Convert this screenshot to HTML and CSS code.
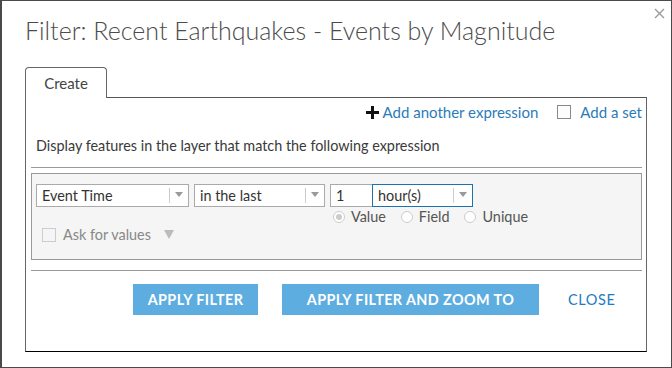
FILE: index.html
```html
<!DOCTYPE html>
<html lang="en">
<head>
  <meta charset="UTF-8" />
  <title>Filter</title>
  <link rel="stylesheet" href="styles.css">
</head>
<body>

  <div class="dialog">
    <svg class="close-x" width="11" height="11" viewBox="0 0 11 11">
      <path d="M1 1L10 10M10 1L1 10" stroke="#9a9a9a" stroke-width="1.4" fill="none"/>
    </svg>
    <h1 class="title">Filter: Recent Earthquakes - Events by Magnitude</h1>

    <div class="tabs">
      <div class="tab">Create</div>
      <div class="tab-rest"></div>
    </div>

    <div class="panel">
      <div class="toolbar">
        <a class="add-link">
          <svg class="plus" width="13" height="13" viewBox="0 0 13 13">
            <rect x="5" y="0" width="3" height="13" fill="#111"/>
            <rect x="0" y="5" width="13" height="3" fill="#111"/>
          </svg>Add another expression</a>
        <label class="set"><span class="box"></span>Add a set</label>
      </div>

      <p class="desc">Display features in the layer that match the following expression</p>

      <div class="expr">
        <div class="expr-row">
          <div class="select field"><span>Event Time</span><i class="arrow"></i></div>
          <div class="select op"><span>in the last</span><i class="arrow"></i></div>
          <div class="num">1</div>
          <div class="select unit"><span>hour(s)</span><i class="arrow"></i></div>
        </div>
        <div class="radios">
          <label><span class="radio on"></span>Value</label>
          <label><span class="radio"></span>Field</label>
          <label><span class="radio"></span>Unique</label>
        </div>
        <div class="ask">
          <span class="box"></span>Ask for values <span class="tri"></span>
        </div>
      </div>

      <div class="actions">
        <button class="btn btn-apply">APPLY FILTER</button>
        <button class="btn btn-zoom">APPLY FILTER AND ZOOM TO</button>
        <a class="close-link">CLOSE</a>
      </div>
    </div>
  </div>

</body>
</html>
```

FILE: styles.css
```css
body {
  margin: 0;
  font-family: Lato, 'Open Sans', sans-serif;
  color: #4c4c4c;
}

.dialog {
  position: relative;
  width: 672px;
  height: 368px;
  box-sizing: border-box;
  border: 1px solid #4a4a4a;
  border-left-width: 2px;
  background: #fff;
  padding: 0 24px 0 23px;
}

.close-x {
  position: absolute;
  top: 7px;
  right: 6px;
}

.title {
  margin: 0;
  padding-top: 14px;
  height: 66px;
  box-sizing: border-box;
  font-size: 25px;
  line-height: 30px;
  font-weight: 300;
  color: #4c4c4c;
  white-space: nowrap;
}

.tabs {
  display: flex;
  align-items: flex-end;
  height: 31px;
}

.tab {
  width: 82px;
  height: 31px;
  box-sizing: border-box;
  border: 1px solid #666;
  border-bottom: none;
  border-radius: 4px 4px 0 0;
  font-size: 15px;
  color: #444;
  text-align: center;
  line-height: 30px;
}

.tab-rest {
  flex: 1;
  border-bottom: 1px solid #555;
}

.panel {
  height: 254px;
  box-sizing: border-box;
  border: 1px solid #666;
  border-top: none;
  border-bottom-color: #000;
  padding: 0 4px 0 5px;
}

.toolbar {
  display: flex;
  justify-content: flex-end;
  align-items: center;
  gap: 19px;
  padding-top: 5px;
  height: 18px;
  font-size: 15px;
  line-height: 18px;
  color: #2b7bb9;
}

.add-link {
  display: flex;
  align-items: center;
}

.plus {
  margin-right: 4px;
}

.set {
  display: flex;
  align-items: center;
  gap: 9px;
}

.box {
  display: inline-block;
  width: 12px;
  height: 12px;
  border: 1px solid #888;
  background: #fbfcfc;
}

.desc {
  margin: 0;
  padding: 16px 0 0 5px;
  height: 30px;
  font-size: 14.4px;
  line-height: 18px;
  color: #3a3a3a;
}

.expr {
  border-top: 1px solid #999;
  padding-top: 5px;
  font-size: 14.4px;
}

.expr > * {
  background: #f4f5f4;
}

.expr-row {
  display: flex;
  gap: 5px;
  padding: 10px 0 0 4px;
  border: 1px solid #999;
  border-bottom: none;
}

.select {
  display: flex;
  align-items: center;
  height: 23px;
  box-sizing: border-box;
  border: 1px solid #aaa;
  background: #fff;
  color: #333;
}

.select span {
  flex: 1;
  padding-left: 5px;
}

.arrow {
  width: 18px;
  height: 15px;
  border-left: 1px solid #ccc;
  position: relative;
}

.arrow::after {
  content: "";
  position: absolute;
  left: 5px;
  top: 4px;
  border: 4px solid transparent;
  border-top: 5px solid #999;
}

.field { width: 153px; }
.op { width: 131px; }
.unit {
  width: 101px;
  border-color: #1d73b0;
  margin-left: -5px;
}

.num {
  width: 42px;
  height: 23px;
  box-sizing: border-box;
  border: 1px solid #aaa;
  border-right: none;
  background: #fff;
  padding-left: 5px;
  line-height: 21px;
  color: #333;
}

.radios {
  display: flex;
  height: 20px;
  line-height: 20px;
  padding-left: 301px;
  border-left: 1px solid #999;
  border-right: 1px solid #999;
  color: #555;
}

.radios label {
  display: flex;
  align-items: center;
  gap: 6px;
  margin-right: 15px;
}

.radio {
  width: 10px;
  height: 10px;
  border: 1px solid #ccc;
  border-radius: 50%;
  background: #fff;
  position: relative;
}

.radio.on::after {
  content: "";
  position: absolute;
  left: 2px;
  top: 2px;
  width: 6px;
  height: 6px;
  border-radius: 50%;
  background: #ccc;
}

.ask {
  display: flex;
  align-items: center;
  gap: 7px;
  height: 33px;
  box-sizing: border-box;
  padding: 0 0 17px 10px;
  border: 1px solid #999;
  border-top: none;
  color: #888;
}

.ask .box {
  border-color: #ccc;
  background: #f4f5f4;
}

.tri {
  margin-left: 6px;
  border: 5px solid transparent;
  border-top: 9px solid #bbb;
  border-bottom: none;
}

.actions {
  margin-top: 10px;
  border-top: 1px solid #999;
  display: flex;
  align-items: center;
  padding: 13px 0 0 102px;
}

.btn {
  height: 31px;
  border: none;
  background: #5dade0;
  color: #fff;
  font-family: Lato, sans-serif;
  font-weight: 700;
  font-size: 14.4px;
  letter-spacing: 0.4px;
  padding: 0;
  margin-right: 24px;
}

.btn-apply { width: 125px; }
.btn-zoom { width: 257px; }

.close-link {
  font-size: 14.5px;
  letter-spacing: 0.6px;
  color: #1e7ac3;
  margin-left: 5px;
}
```
